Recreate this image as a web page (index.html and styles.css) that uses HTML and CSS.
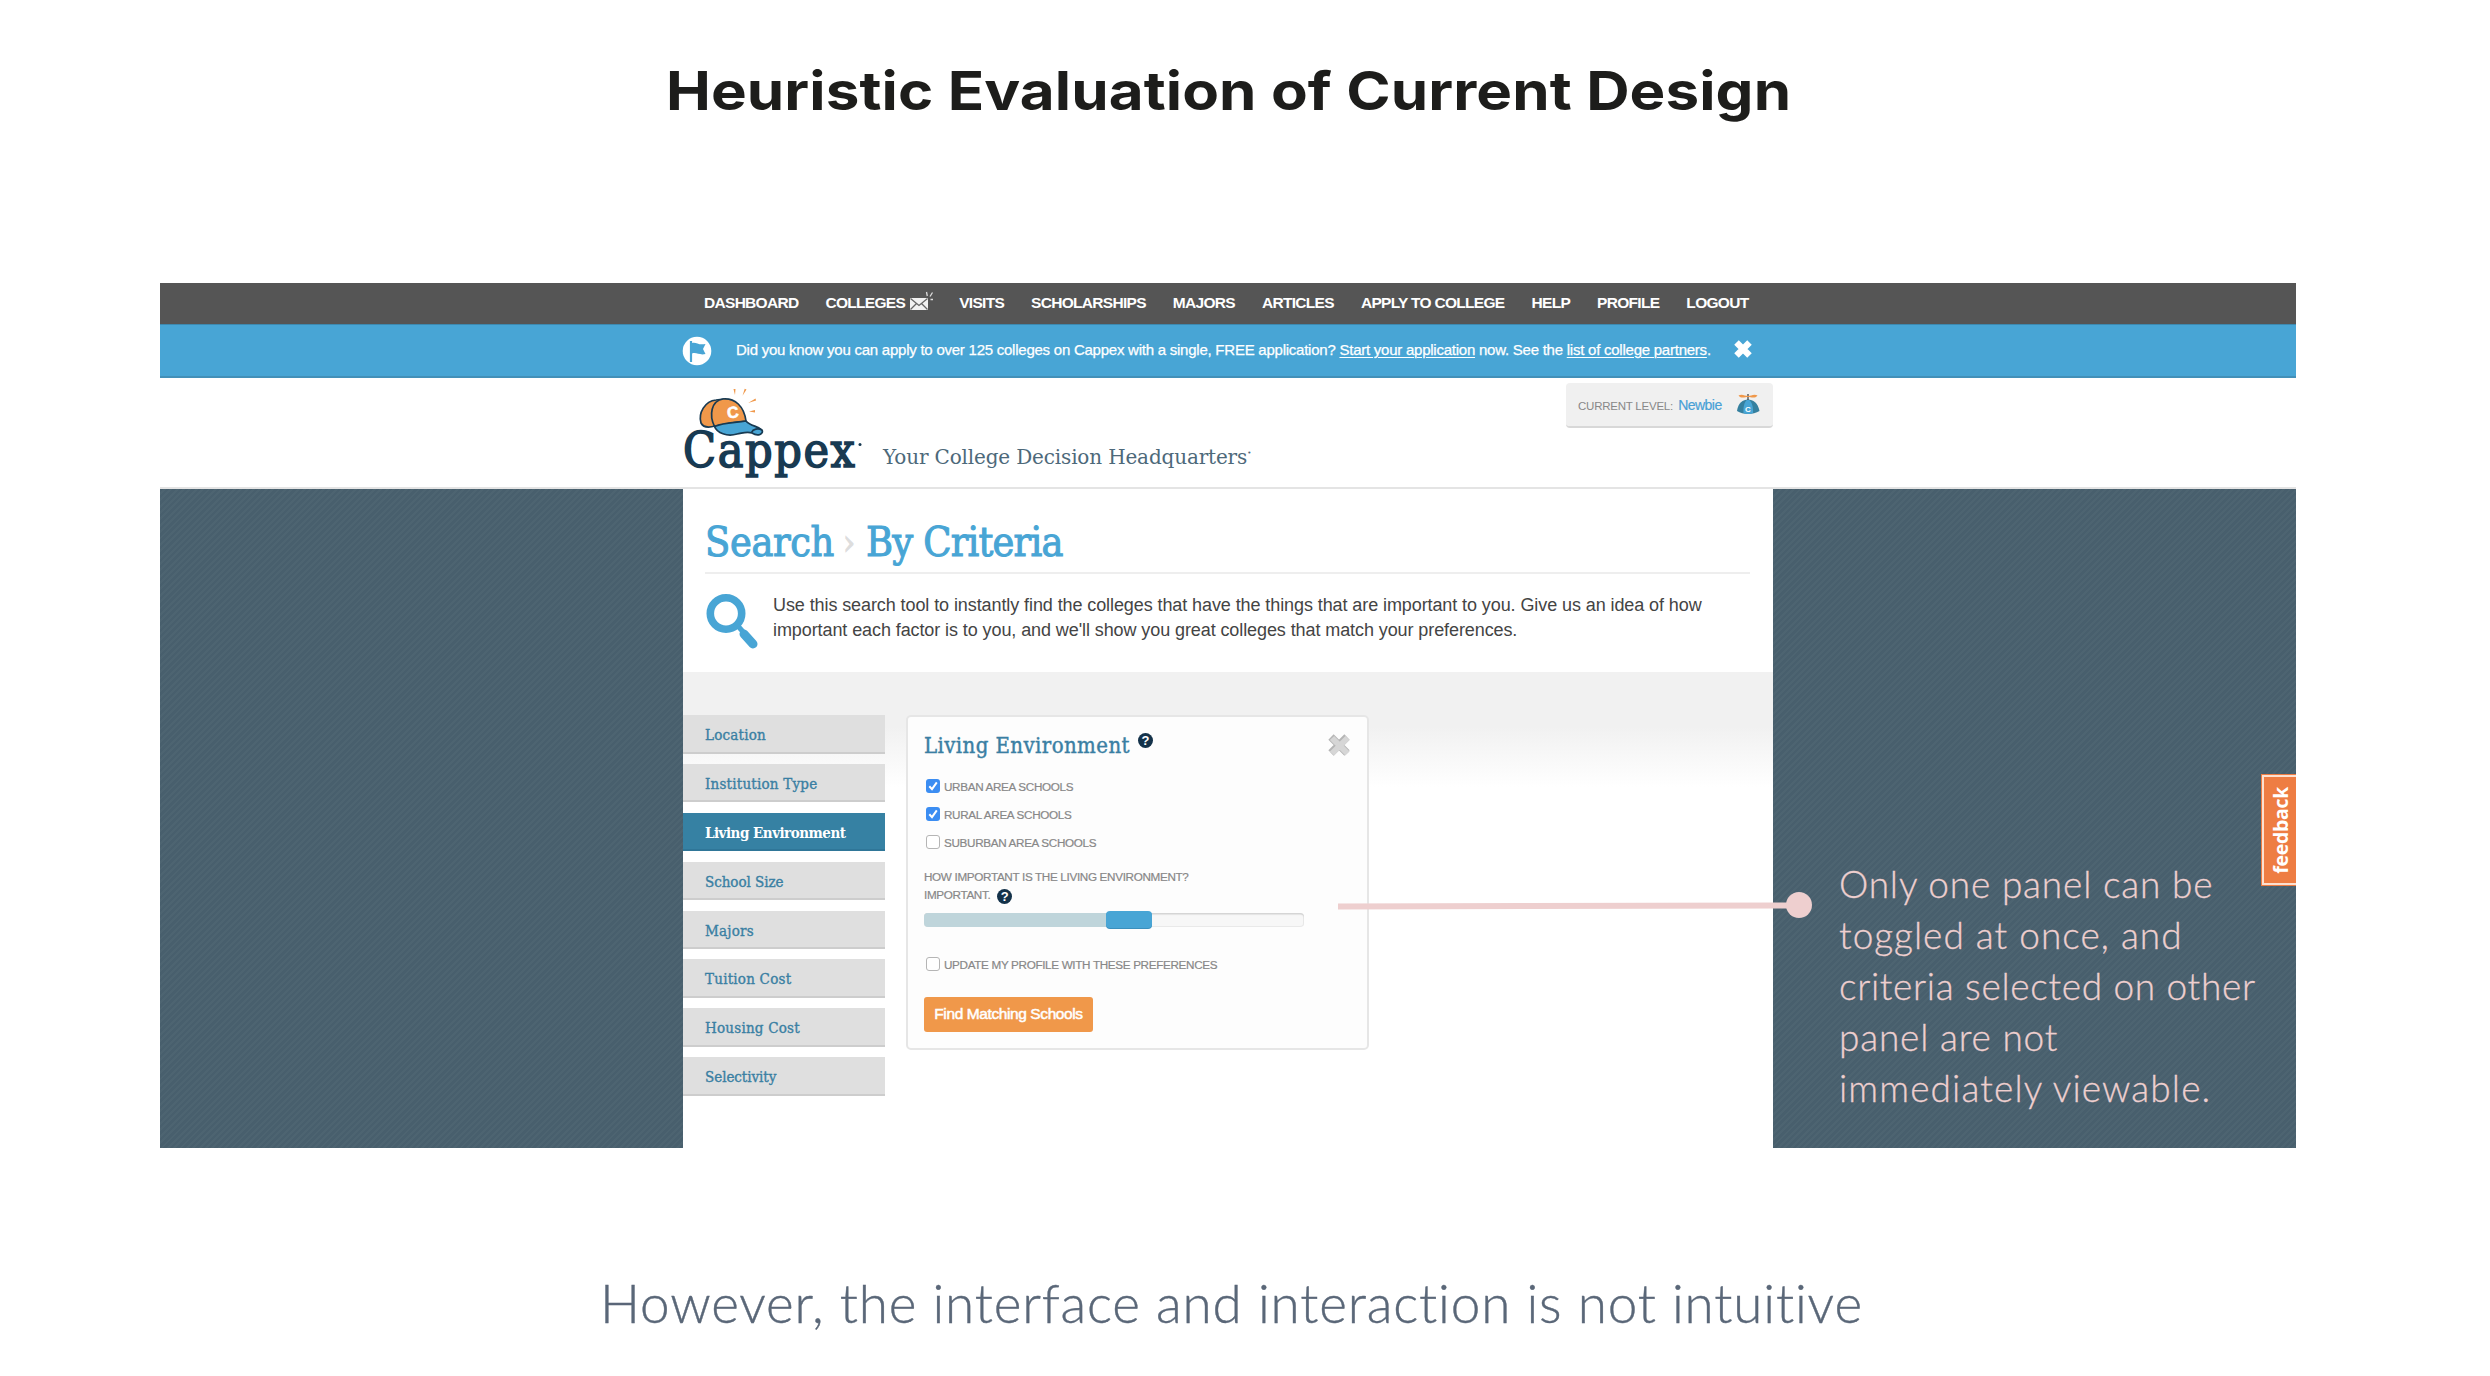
FILE: index.html
```html
<!DOCTYPE html>
<html lang="en">
<head>
<meta charset="utf-8">
<title>Heuristic Evaluation of Current Design</title>
<link rel="stylesheet" href="styles.css">
</head>
<body>
<div class="slide">
  <h1 class="title"><span>Heuristic Evaluation of Current Design</span></h1>

  <div class="shot">
    <nav class="nav">
      <a>DASHBOARD</a>
      <a class="with-icon">COLLEGES
        <svg class="mail" width="26" height="22" viewBox="0 0 26 22"><rect x="1" y="8" width="18" height="12" fill="#f2f2f2"/><path d="M1.5 8.5l8.500 7 8.500-7M1.500 19.500l6-6M18.500 19.500l-6-6" fill="none" stroke="#666" stroke-width="1.300"/><path d="M17.500 2l.8 4M23.500 2.500l-2.500 4M21.500 9.500h2.500" stroke="#ddd" stroke-width="1.300"/></svg>
      </a>
      <a>VISITS</a>
      <a>SCHOLARSHIPS</a>
      <a>MAJORS</a>
      <a>ARTICLES</a>
      <a>APPLY TO COLLEGE</a>
      <a>HELP</a>
      <a>PROFILE</a>
      <a>LOGOUT</a>
    </nav>

    <div class="banner">
      <svg class="flag" width="30" height="34" viewBox="0 0 30 34"><circle cx="15" cy="17" r="14.300" fill="#fff"/><path d="M9 7v21" stroke="#48a5d5" stroke-width="2.200"/><path d="M10 9c4-1.500 6 2.500 13.500 1l-2.500 5 2.500 5c-6 1.500-9-2-13.500-.5z" fill="#48a5d5"/></svg>
      <p>Did you know you can apply to over 125 colleges on Cappex with a single, FREE application? <u>Start your application</u> now. See the <u>list of college partners</u>.</p>
      <svg class="close" width="20" height="20" viewBox="0 0 20 20"><path d="M3.500 3.500l13 13M16.500 3.500l-13 13" stroke="#fff" stroke-width="6.400"/></svg>
    </div>

    <header class="header">
      <svg class="logo" width="200" height="105" viewBox="0 0 200 105">
        <text class="wordmark" x="3" y="86.500">Cappex</text>
        <circle cx="180" cy="64.500" r="1.500" fill="#183a52"/>
        <g stroke="#183a52" stroke-width="1.700" stroke-linejoin="round">
          <path d="M35 46C28 48 23 47 21 43C18 33 25 21 36 20L44 19L40 44z" fill="#f0984a"/>
          <path d="M34.500 46.500C29 35 31 21 43 19C55 18 64 26 66 41C55 42 45 44 34.500 46.500z" fill="#f0984a"/>
          <path d="M34.500 46.500C45 42 54 43 66 41C70 46 78 46 82 50C84 54 78 57 72 53C67 51 63 53 57 54C47 57 37 53 34.500 46.500z" fill="#48a5d5"/>
          <path d="M82 50c-4-2-9-1-10.500 2.500" fill="none"/>
        </g>
        <text class="cap-letter" x="47" y="38" transform="rotate(-7 52 32)">C</text>
        <path d="M53.500 9h2l-.5 6zM66.500 9.500l-1.800-.8-2.200 7zM75.500 18.500l.6 2-8 2.500zM75 30v2.400l-6-.8z" fill="#f0984a"/>
      </svg>
      <p class="tagline">Your College Decision Headquarters<sup>•</sup></p>
      <div class="level">
        <span class="level-label">CURRENT LEVEL:</span>
        <span class="level-name">Newbie</span>
        <svg class="beanie" width="26" height="24" viewBox="0 0 26 24"><path d="M2 18C3 10 8 6.500 13 6.500S23 10 24.500 18C18 22 8 22 2 18z" fill="#35809f"/><path d="M8.500 20C8 13 10 7 13 6.500C16 7 18.500 13 18 20C15 21.200 11 21.200 8.500 20z" fill="#48a5d5"/><path d="M13 1v6" stroke="#444" stroke-width="1.300"/><path d="M3.500 2.500C7 .5 10 3 13 3S19 .5 22.500 2.500C20 6 16 4 13 4S6 6 3.500 2.500z" fill="#f0984a"/><text class="beanie-letter" x="10" y="18.500">C</text></svg>
      </div>
    </header>

    <div class="body">
      <main class="content">
        <h2 class="crumb"><span class="c1">Search</span><span class="sep">›</span><span class="c2">By Criteria</span></h2>
        <div class="intro">
          <svg width="53" height="57" viewBox="0 0 53 57"><circle cx="20" cy="20.500" r="15.700" fill="none" stroke="#48a5d5" stroke-width="7.600"/><path d="M32 33l6 7" stroke="#48a5d5" stroke-width="5"/><path d="M38 41l9 10" stroke="#48a5d5" stroke-width="9" stroke-linecap="round"/></svg>
          <p>Use this search tool to instantly find the colleges that have the things that are important to you. Give us an idea of how<br>important each factor is to you, and we'll show you great colleges that match your preferences.</p>
        </div>
        <section class="criteria">
          <ul class="tabs">
            <li>Location</li>
            <li>Institution Type</li>
            <li class="active">Living Environment</li>
            <li class="tight">School Size</li>
            <li>Majors</li>
            <li>Tuition Cost</li>
            <li>Housing Cost</li>
            <li class="tight">Selectivity</li>
          </ul>
          <div class="panel">
            <div class="panel-head">
              <h3>Living Environment</h3>
              <span class="help">?</span>
              <svg class="dismiss" width="24" height="24" viewBox="0 0 24 24"><path d="M4 4l16 16M20 4L4 20" stroke="#b5b5b5" stroke-width="7.500"/><path d="M5 5l15.500 15.500M20.500 5L5 20.500" stroke="#d6d6d6" stroke-width="6"/></svg>
            </div>
            <div class="check"><i class="box on"><svg width="14" height="14" viewBox="0 0 14 14"><path d="M3.300 7.300l2.700 2.900 4.800-6.800" fill="none" stroke="#fff" stroke-width="2"/></svg></i>URBAN AREA SCHOOLS</div>
            <div class="check"><i class="box on"><svg width="14" height="14" viewBox="0 0 14 14"><path d="M3.300 7.300l2.700 2.900 4.800-6.800" fill="none" stroke="#fff" stroke-width="2"/></svg></i>RURAL AREA SCHOOLS</div>
            <div class="check"><i class="box"></i>SUBURBAN AREA SCHOOLS</div>
            <div class="question">HOW IMPORTANT IS THE LIVING ENVIRONMENT?<br>IMPORTANT. <span class="help">?</span></div>
            <div class="slider"><div class="fill"></div><div class="handle"></div></div>
            <div class="check update"><i class="box"></i>UPDATE MY PROFILE WITH THESE PREFERENCES</div>
            <button class="find">Find Matching Schools</button>
          </div>
        </section>
      </main>
    </div>

    <div class="feedback"><span>feedback</span></div>
    <svg class="pointer" width="480" height="30" viewBox="0 0 480 30"><path d="M0 16.500L461 15.500" stroke="#eecfcf" stroke-width="6"/><circle cx="461" cy="15" r="13" fill="#eecfcf"/></svg>
    <p class="note"><span class="n1">Only one panel can be</span><span class="n2">toggled at once, and</span><span class="n3">criteria selected on other</span><span class="n4">panel are not</span><span class="n5">immediately viewable.</span></p>
  </div>

  <p class="caption">However, the interface and interaction is not intuitive</p>
</div>
</body>
</html>
```
FILE: styles.css
```css
* { box-sizing: border-box; }
body { margin: 0; background: #fff; font-family: "Liberation Sans", Arial, sans-serif; }
p, h1, h2, h3, ul { margin: 0; padding: 0; font-weight: 400; }
svg { display: block; flex: none; }

.slide { width: 2490px; height: 1376px; overflow: hidden; padding: 58px 194px 0 160px; }
.title {
  height: 66px; margin-bottom: 159px; padding-left: 506px;
  font: 700 54px/66px Inter, sans-serif; color: #1d1d1b; white-space: nowrap;
}
.title span { display: inline-block; transform: scaleX(1.112); transform-origin: 0 0; letter-spacing: .1px; }

.shot { position: relative; width: 2136px; height: 865px; display: flex; flex-direction: column; }

.nav {
  height: 41px; background: #555; padding: 0 547.5px 0 544px;
  display: flex; justify-content: space-between;
  font: 700 15.5px/40px "Liberation Sans", sans-serif; letter-spacing: -.7px; color: #fff;
}
.with-icon { display: flex; gap: 4px; }
.mail { margin-top: 7px; margin-right: -3px; }

.banner {
  height: 54px; padding-left: 522px; display: flex; align-items: flex-start;
  background: #48a5d5; border-top: 1px solid #3d89b0; border-bottom: 2px solid #4390b8;
  color: #fff; white-space: nowrap;
}
.flag { margin: 9px 25px 0 0; }
.banner p { margin-left: -1px; font-size: 15px; line-height: 50px; letter-spacing: -.241px; width: 997px; -webkit-text-stroke: .25px #fff; }
.banner u { text-underline-offset: 2px; text-decoration-thickness: 1px; }
.close { margin-top: 14px; }

.header {
  height: 111px; border-bottom: 2px solid #e4e4e4; padding-left: 520px;
  display: flex; align-items: flex-start;
}
.logo { margin-top: 2px; }
.wordmark { font: 400 48px "DejaVu Serif Condensed", "DejaVu Serif", serif; font-stretch: condensed; letter-spacing: 1.6px; fill: #183a52; stroke: #183a52; stroke-width: 1.5px; }
.cap-letter { font: 700 16px "Liberation Sans", sans-serif; fill: #fff; stroke: #fff; stroke-width: .6px; }
.tagline {
  margin: 64px 0 0 3px; width: 683px; font: 400 20px/30px "DejaVu Serif", serif;
  letter-spacing: -.16px; color: #4d697a; white-space: nowrap;
}
.tagline sup { font-size: 7px; vertical-align: 9px; line-height: 0; }
.level {
  width: 207px; height: 45px; margin-top: 5px; padding: 0 12px; display: flex;
  background: #f0f0f0; border-radius: 4px; border-bottom: 2px solid #d8d8d8;
  line-height: 45px; white-space: nowrap;
}
.level-label { width: 100.500px; font-size: 11.5px; letter-spacing: -.23px; color: #888; line-height: 46px; }
.level-name { width: 57px; font-size: 14px; letter-spacing: -.53px; color: #48a0d6; -webkit-text-stroke: .2px #48a0d6; }
.beanie { margin-top: 10px; }
.beanie-letter { font: 700 8px "Liberation Sans", sans-serif; fill: #fff; }

.body {
  flex: 1; padding-left: 523px; display: flex;
  background: repeating-linear-gradient(135deg, #485f6d 0 2.500px, #4d6471 2.500px 4.500px);
}
.content { width: 1090px; background: #fff; }
.crumb {
  height: 85px; margin: 0 23px 0 22px; padding-top: 23px; display: flex; border-bottom: 2px solid #eee;
  font: 400 41px/60px "DejaVu Serif Condensed", "DejaVu Serif", serif; font-stretch: condensed;
  color: #48a5d5; -webkit-text-stroke: 1px #48a5d5; white-space: nowrap;
}
.c1 { letter-spacing: -.35px; width: 138px; }
.sep { color: #ddd; -webkit-text-stroke-color: #ddd; width: 23px; font-size: 34px; }
.c2 { letter-spacing: -.8px; }
.intro { height: 98px; padding: 19px 23px 0; display: flex; gap: 14px; }
.intro p { font-size: 18px; line-height: 24.500px; letter-spacing: -.09px; color: #444; white-space: nowrap; }

.criteria {
  height: 476px; padding-top: 43px; display: flex; gap: 21px; align-items: flex-start;
  background: linear-gradient(#f1f1f1 0 55px, #fff 115px);
}
.tabs { width: 202px; list-style: none; display: flex; flex-direction: column; gap: 10.400px; }
.tabs li {
  height: 38.500px; padding-left: 22px; background: #dfdfdf; border-bottom: 2px solid #cdcdcd;
  font: 400 15px/41px "DejaVu Serif Condensed", "DejaVu Serif", serif; font-stretch: condensed;
  letter-spacing: .22px; color: #3a7fa3; -webkit-text-stroke: .35px #3a7fa3; white-space: nowrap;
}
.tabs .tight { letter-spacing: -.05px; }
.tabs .active { background: #3681a3; border-color: #2f7698; color: #fff; font-weight: 700; letter-spacing: -.5px; -webkit-text-stroke: 0; }

.panel {
  width: 463px; height: 335px; padding: 14px 16px 0; background: #fdfdfd;
  border: 2px solid #e6e6e6; border-radius: 5px; color: #888;
}
.panel-head { height: 42px; display: flex; align-items: flex-start; }
.panel h3 {
  width: 214px; font: 400 22px/30px "DejaVu Serif Condensed", "DejaVu Serif", serif; font-stretch: condensed;
  letter-spacing: .4px; color: #3a7fa3; -webkit-text-stroke: .4px #3a7fa3; white-space: nowrap;
}
.help {
  display: inline-block; width: 15px; height: 15px; border-radius: 50%; background: #14324a; color: #fff;
  font: 700 13px/15px "Liberation Sans", sans-serif; letter-spacing: 0; text-align: center;
}
.panel-head .help { margin-top: 2px; }
.dismiss { margin: 2px 0 0 174px; }
.check { height: 27.800px; display: flex; align-items: flex-start; padding-left: 2px; font-size: 11.7px; line-height: 28px; letter-spacing: -.33px; white-space: nowrap; -webkit-text-stroke: .2px #888; }
.box { width: 14px; height: 14px; margin: 6px 4px 0 0; border: 1px solid #b5b5b5; border-radius: 3px; background: #fff; }
.box.on { border: 0; background: #3b8df2; }
.question { margin-top: 12px; height: 35px; font-size: 11.7px; line-height: 17.500px; letter-spacing: -.33px; white-space: nowrap; -webkit-text-stroke: .2px #888; }
.question .help { margin: 0 0 -8px 4px; vertical-align: -2px; -webkit-text-stroke: 0; }
.slider {
  width: 380px; height: 14px; margin: 9.500px 0 24.500px; display: flex; align-items: center;
  background: #f7f7f7; border-radius: 4px; box-shadow: inset 0 1.500px 1px #d4d4d4, inset 0 0 0 1px #e9e9e9;
}
.fill { width: 182px; height: 14px; background: #bfd5db; border-radius: 4px 0 0 4px; }
.handle { width: 46px; height: 17px; background: #48a5d5; border-radius: 4px; box-shadow: 0 1px 0 #3a8fbd; }
.find {
  display: block; width: 169px; height: 35px; margin: 17.500px 0 0; padding: 0; border: 0; border-radius: 3px;
  background: #f0984a; color: #fff; font: 400 15.5px/34px "Liberation Sans", sans-serif;
  letter-spacing: -.4px; -webkit-text-stroke: .5px #fff; white-space: nowrap;
}

.feedback {
  position: absolute; left: 2101px; top: 491px; width: 35px; height: 112px; color: #fff;
  background: #ee7d43; border: 1px solid #ee7d43; border-right: 0; box-shadow: inset 2px 0 #fde0d0, inset 0 2px #fde0d0, inset 0 -2px #fde0d0;
  display: flex; align-items: center; justify-content: center;
}
.feedback span { writing-mode: vertical-rl; transform: rotate(180deg); font: 700 19.500px/24px "Open Sans", sans-serif; letter-spacing: -.3px; margin-left: 3px; }
.pointer { position: absolute; left: 1178px; top: 607px; }
.note {
  position: absolute; left: 1679px; top: 575px; display: flex; flex-direction: column;
  font: 300 37px/51px Lato, sans-serif; color: #eecfcf; -webkit-text-stroke: .3px #eecfcf; white-space: nowrap;
}
.n1 { letter-spacing: .83px; }
.n2 { letter-spacing: 1.01px; }
.n3 { letter-spacing: .68px; }
.n4 { letter-spacing: .8px; }
.n5 { letter-spacing: 1.12px; }

.caption {
  margin-top: 124px; padding-left: 440px; font: 300 53px/62px Lato, sans-serif;
  letter-spacing: .86px; color: #5a6778; -webkit-text-stroke: .4px #5a6778; white-space: nowrap;
}
```
